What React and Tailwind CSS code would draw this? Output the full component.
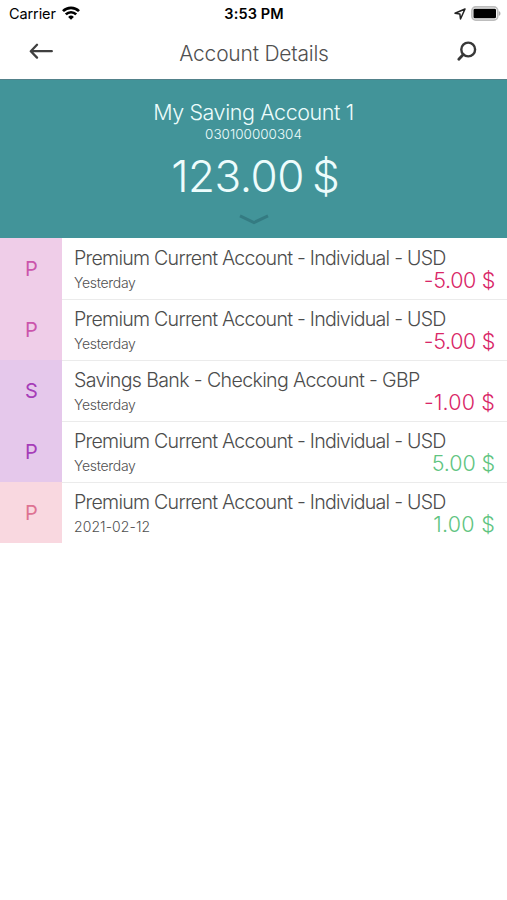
import * as React from "react";
import clsx from "clsx";

const avatarTones = {
  pink: "bg-[#efcde8] text-[#cb55ac]",
  purple: "bg-[#e5c8eb] text-[#a63db8]",
  rose: "bg-[#f9d8e0] text-[#de7393]"
};

const transactions = [
  { id: 1, title: "Premium Current Account - Individual - USD", date: "Yesterday", amount: "-5.00 $", tone: "pink" },
  { id: 2, title: "Premium Current Account - Individual - USD", date: "Yesterday", amount: "-5.00 $", tone: "pink" },
  { id: 3, title: "Savings Bank - Checking Account - GBP", date: "Yesterday", amount: "-1.00 $", tone: "purple", titleClass: "tracking-[-0.64px]", amountClass: "tracking-[0.15px]" },
  { id: 4, title: "Premium Current Account - Individual - USD", date: "Yesterday", amount: "5.00 $", tone: "purple", amountClass: "tracking-[-0.1px]" },
  { id: 5, title: "Premium Current Account - Individual - USD", date: "2021-02-12", amount: "1.00 $", tone: "rose", amountClass: "tracking-[0.25px]" }
];

function WifiIcon() {
  return (
    <svg className="-mt-[2px] h-[14px] w-[18px]" viewBox="0 0 18 14" fill="none" stroke="#000" strokeWidth="2.7" aria-hidden="true">
      <path d="M1 5.1a11.4 11.4 0 0 1 16 0" />
      <path d="M3.8 8.4a7.4 7.4 0 0 1 10.4 0" />
      <path d="M9 13.8 6.1 10.9a4.1 4.1 0 0 1 5.8 0Z" fill="#000" stroke="none" />
    </svg>
  );
}

function StatusBar() {
  return (
    <div className="grid h-[27px] grid-cols-3 items-center pl-[8px] pr-[7px] text-black">
      <div className="flex items-center gap-[6px] pl-px">
        <span className="text-[14.5px] leading-[27px] tracking-[-0.1px]">Carrier</span>
        <WifiIcon />
      </div>
      <span className="text-center text-[14.5px] font-semibold leading-[27px] tracking-[0.1px]">3:53 PM</span>
      <div className="-mr-px flex items-center justify-end gap-[5px]">
        <svg className="h-3 w-3" viewBox="0 0 12 12" fill="none" stroke="#222" strokeWidth="1.5" strokeLinejoin="round" aria-hidden="true">
          <path d="M11 1 1 5.3l4.9.8.6 4.9Z" />
        </svg>
        <svg className="-mt-px h-[15px] w-[30px]" viewBox="0 0 30 15" aria-hidden="true">
          <rect x=".9" y=".9" width="25.8" height="13.2" rx="3.8" fill="#fff" stroke="#bdbdbd" strokeWidth="1.7" />
          <rect x="2.5" y="2.7" width="22.5" height="9.6" rx="1.4" fill="#000" />
          <path d="M27.8 5v5c2.2-1 2.2-4 0-5Z" fill="#aaa" />
        </svg>
      </div>
    </div>
  );
}

function NavBar() {
  return (
    <header className="flex h-[52px] items-center justify-between pl-[29px] pr-[30px]">
      <button type="button" aria-label="Back" className="-mt-[4px]">
        <svg className="h-4 w-6" viewBox="0 0 24 16" fill="none" stroke="#3f3f3f" strokeWidth="2.3" strokeLinecap="round" strokeLinejoin="round" aria-hidden="true">
          <path d="M22.8 8.2H2M8 1.8 1.8 8.2 8 14.6" />
        </svg>
      </button>
      <h1 className="-ml-[2px] pt-px text-[21px] font-light tracking-[-0.22px] text-[#505050]">Account Details</h1>
      <button type="button" aria-label="Search" className="-mt-[2px]">
        <svg className="h-5 w-5 overflow-visible" viewBox="0 0 20 20" fill="none" stroke="#383838" strokeWidth="2.4" strokeLinecap="round" aria-hidden="true">
          <circle cx="11.2" cy="7.5" r="6.9" />
          <path d="M6.3 12.5 1.8 17.2" strokeWidth="2.8" />
        </svg>
      </button>
    </header>
  );
}

function AccountSummary() {
  return (
    <section className="flex h-[159px] flex-col items-center border-t border-[#52818a] bg-[#429499] pt-[18px] text-[#edfcfc]">
      <h2 className="text-[21.5px] font-light leading-7 tracking-[-0.42px]">My Saving Account 1</h2>
      <p className="text-[13.5px] font-light leading-4">030100000304</p>
      <p className="ml-[4px] mt-[4px] flex gap-[8px] text-[44px] font-light leading-[60px]">
        <span className="tracking-[-0.5px]">123.00</span>
        <span>$</span>
      </p>
      <svg className="mt-[8px] h-[11px] w-[30px]" viewBox="0 0 30 11" fill="none" stroke="#347b82" strokeWidth="3" aria-hidden="true">
        <path d="m1 1.8 14 6.7 14-6.7" />
      </svg>
    </section>
  );
}

function TransactionRow({ title, date, amount, tone, titleClass = "tracking-[-0.76px]", amountClass = "tracking-[-0.35px]", first }) {
  return (
    <li className="flex h-[61px]">
      <span className={clsx("flex w-[62px] shrink-0 items-center justify-center pl-px pt-px text-[20px]", avatarTones[tone])}>
        {title[0]}
      </span>
      <div className={clsx("flex min-w-0 flex-1 flex-col border-t px-[12px] pt-[6px]", first ? "border-transparent" : "border-[#ebebeb]")}>
        <p className={clsx("whitespace-nowrap text-[19.6px] font-light leading-[26px] text-[#4c4c4c]", titleClass)}>{title}</p>
        <div className="-mt-[2px] flex items-baseline justify-between leading-[22px]">
          <span className={clsx("text-[14px] font-light text-[#505050]", date === "Yesterday" ? "tracking-[-0.3px]" : "tracking-[0.08px]")}>{date}</span>
          <span className={clsx("text-[21.5px] font-light", amountClass, amount.startsWith("-") ? "text-[#d92667]" : "text-[#5fc481]")}>
            {amount}
          </span>
        </div>
      </div>
    </li>
  );
}

export default function App() {
  return (
    <main className="h-[900px] w-full overflow-hidden bg-white font-['Inter',sans-serif]">
      <StatusBar />
      <NavBar />
      <AccountSummary />
      <ul>
        {transactions.map((transaction, index) => (
          <TransactionRow key={transaction.id} {...transaction} first={index === 0} />
        ))}
      </ul>
    </main>
  );
}
